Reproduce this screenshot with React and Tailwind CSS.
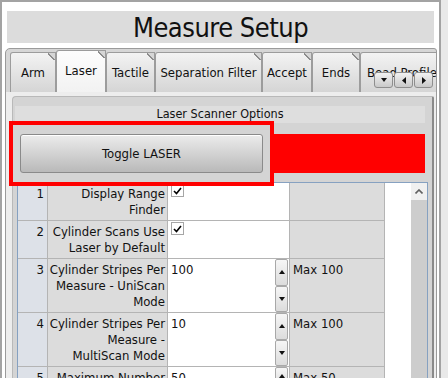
import React from 'react';

const font = "font-['DejaVu_Sans_Condensed','DejaVu_Sans',sans-serif] font-stretch-condensed";

const tabs = [
  { label: 'Arm', w: 'w-[46px]' },
  { label: 'Laser', w: 'w-[50px]', active: true },
  { label: 'Tactile', w: 'w-[49px]' },
  { label: 'Separation Filter', w: 'w-[107px]' },
  { label: 'Accept', w: 'w-[50px]' },
  { label: 'Ends', w: 'w-[48px]' },
  { label: 'Bead Profile', w: 'w-[90px] !justify-start pl-[6px]' },
];

const rows = [
  { n: 1, label: ['Display Range', 'Finder'], check: true },
  { n: 2, label: ['Cylinder Scans Use', 'Laser by Default'], check: true },
  { n: 3, label: ['Cylinder Stripes Per', 'Measure - UniScan', 'Mode'], value: '100', max: 'Max 100' },
  { n: 4, label: ['Cylinder Stripes Per', 'Measure -', 'MultiScan Mode'], value: '10', max: 'Max 100' },
  { n: 5, label: ['Maximum Number', 'of Scans'], value: '50', max: 'Max 50' },
];

const Tri = ({ dir }) => {
  const d = {
    up: 'M0 4 L3 0 L6 4 Z',
    down: 'M0 0 L6 0 L3 4 Z',
    left: 'M4 0 L4 7 L0 3.5 Z',
    right: 'M0 0 L0 7 L4 3.5 Z',
  }[dir];
  const box = dir === 'left' || dir === 'right' ? '0 0 4 7' : '0 0 6 4';
  const size = dir === 'left' || dir === 'right' ? 'h-[7px] w-[4px]' : 'h-[4px] w-[6px]';
  return (
    <svg viewBox={box} className={size}>
      <path d={d} fill="#111" />
    </svg>
  );
};

const Spinner = () => (
  <div className="mr-px flex w-[13px] flex-col">
    <div className="flex flex-1 items-center justify-center rounded-[2px] border border-[#a8a8a8] bg-[linear-gradient(#f6f6f6,#dcdcdc)]">
      <Tri dir="up" />
    </div>
    <div className="flex flex-1 items-center justify-center rounded-[2px] border border-[#a8a8a8] bg-[linear-gradient(#f6f6f6,#dcdcdc)]">
      <Tri dir="down" />
    </div>
  </div>
);

const Checkbox = () => (
  <div className="ml-[3px] mt-px flex h-[13px] w-[13px] items-center justify-center border border-[#a6a6a6] bg-white">
    <svg viewBox="0 0 9 8" className="h-[8px] w-[9px]">
      <path d="M1 4 L3.5 6.5 L8 1" fill="none" stroke="#000" strokeWidth="1.6" />
    </svg>
  </div>
);

const App = () => {
  return (
    <div className={`relative flex h-[378px] w-[448px] overflow-hidden bg-[#e9e9e9] text-[#111] ${font}`}>
      <div className="flex h-[400px] w-[441px] shrink-0 flex-col overflow-hidden border-2 border-[#a3a3a3] bg-white">
        <div className="ml-[5px] mr-[5px] mt-[9px] flex h-[32px] shrink-0 items-center justify-center bg-[#dcdcdc]">
          <span className="text-[27px] leading-none tracking-[-0.5px]">Measure Setup</span>
        </div>

        <div className="ml-[3px] mr-[2px] mt-[5px] flex min-h-0 flex-1 flex-col rounded-tl-[5px] rounded-tr-[3px] border border-[#9a9a9a] bg-[#d6d6d6]">
          <div className="relative flex shrink-0 items-end overflow-hidden pl-[4px] pt-[1px]">
            {tabs.map((t) => (
              <div
                key={t.label}
                className={`relative flex shrink-0 justify-center overflow-hidden rounded-tl-[3px] border border-b-0 border-[#9c9c9c] pt-[12px] text-[13px] leading-[16px] ${t.w} ${
                  t.active
                    ? 'h-[42px] bg-[linear-gradient(#fdfdfd,#f2f2f2)]'
                    : 'h-[40px] bg-[linear-gradient(#f3f3f3,#d5d5d5)]'
                }`}
              >
                <span className="whitespace-nowrap">{t.label}</span>
                <div className="absolute right-0 top-0 h-[7px] w-[7px] bg-[linear-gradient(225deg,#d6d6d6_46%,#8c8c8c_46%,#8c8c8c_58%,transparent_58%)]" />
              </div>
            ))}
            <div className="absolute right-[3px] top-[23px] flex gap-px">
              {['down', 'left', 'right'].map((d) => (
                <div
                  key={d}
                  className="flex h-[16px] w-[19px] items-center justify-center rounded-[3px] border border-[#8e8e8e] bg-[linear-gradient(#f2f2f2,#c9c9c9)]"
                >
                  <Tri dir={d} />
                </div>
              ))}
            </div>
          </div>

          <div className="flex min-h-0 flex-1 flex-col bg-[#ededed] pl-[6px] pr-[2px] pt-[4px]">
            <div className="flex min-h-0 flex-1 flex-col rounded-tl-[4px] rounded-tr-[2px] border border-r-2 border-[#b9b9b9] border-r-[#8a8a8a] bg-[#d4d4d4]">
              <div className="ml-[2px] mr-[7px] mt-[9px] flex h-[17px] shrink-0 items-center justify-center bg-[#dedede] text-[12.5px]">
                Laser Scanner Options
              </div>

              <div className="mt-[11px] flex h-[39px] shrink-0 pl-[7px] pr-[7px]">
                <button className="flex w-[243px] items-center justify-center rounded-[3px] border border-[#8a8a8a] bg-[linear-gradient(#ececec,#b9b9b9)] text-[13px] shadow-[inset_0_1px_0_#fff]">
                  Toggle LASER
                </button>
                <div className="ml-[11px] flex-1 bg-[#ff0000]" />
              </div>

              <div className="ml-[4px] mr-[4px] mt-[9px] flex min-h-0 flex-1 overflow-hidden border border-b-0 border-[#86a1c1] bg-white text-[13px] leading-[16px]">
                <div className="grid h-fit grid-cols-[29px_119px_121px_94px] gap-px bg-[#b4b4b4] pr-px">
                  {rows.map((r) => (
                    <React.Fragment key={r.n}>
                      <div className="bg-[#dde1e8] pb-[2px] pr-[3px] pt-[3px] text-right">{r.n}</div>
                      <div className="bg-[#dcdcdc] pb-[2px] pr-[2px] pt-[3px] text-right">
                        {r.label.map((l) => (
                          <div key={l} className="whitespace-nowrap">{l}</div>
                        ))}
                      </div>
                      <div className="flex bg-white">
                        {r.check ? (
                          <Checkbox />
                        ) : (
                          <>
                            <div className="flex-1 pl-[3px] pt-[3px]">{r.value}</div>
                            <Spinner />
                          </>
                        )}
                      </div>
                      <div className="bg-[#dcdcdc] pl-[3px] pt-[3px]">{r.max}</div>
                    </React.Fragment>
                  ))}
                </div>
                <div className="flex-1" />
                <div className="flex w-[16px] flex-col">
                  <div className="flex h-[17px] items-center justify-center bg-[#f0f0f0]">
                    <svg viewBox="0 0 8 5" className="h-[5px] w-[8px]">
                      <path d="M0.5 4.5 L4 1 L7.5 4.5" fill="none" stroke="#606060" strokeWidth="1.6" />
                    </svg>
                  </div>
                  <div className="flex-1 bg-[#cdcdcd]" />
                </div>
              </div>
            </div>
          </div>
        </div>
      </div>

      <div className="absolute left-[9px] top-[121px] h-[65px] w-[265px] border-4 border-[#ff0000]" />
    </div>
  );
};

export default App;
